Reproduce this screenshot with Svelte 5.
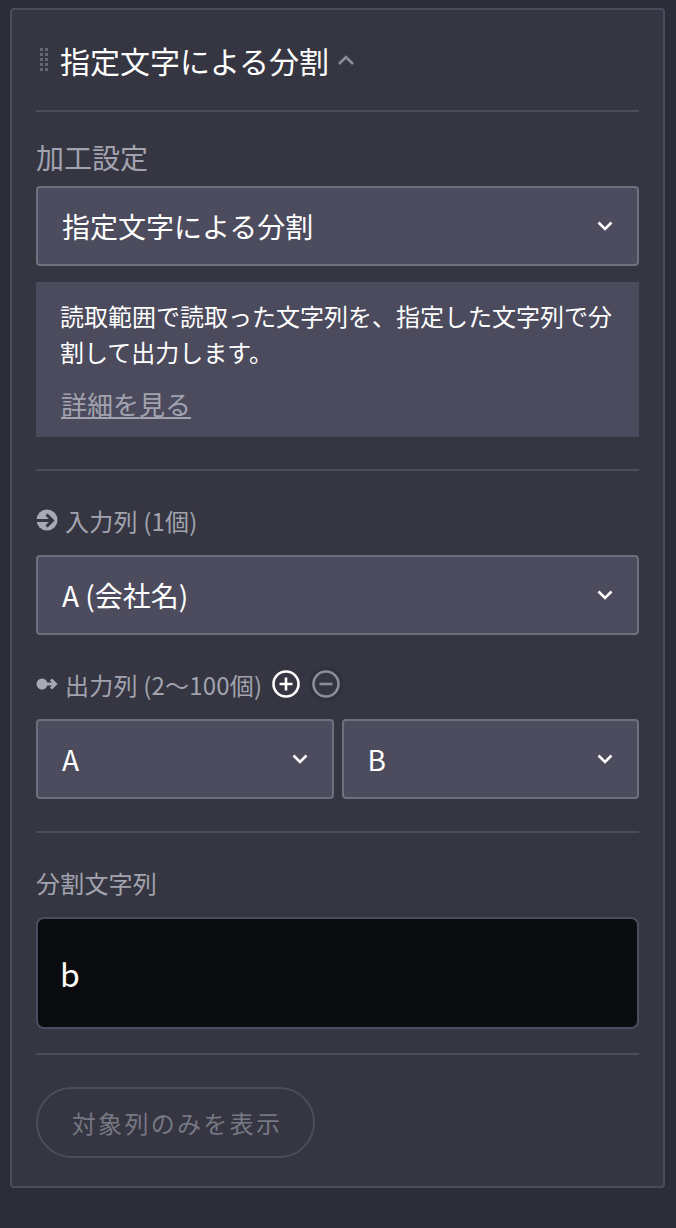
<script lang="ts">
  const method = '指定文字による分割';
  let separator = $state('b');
</script>

{#snippet chevron()}
  <svg class="chevron" width="16" height="12" viewBox="0 0 16 12" aria-hidden="true">
    <path d="M1.5 2.500 8 9l6.500-6.500" fill="none" stroke="currentColor" stroke-width="2.600" />
  </svg>
{/snippet}

{#snippet select(text: string)}
  <div class="select">
    <span>{text}</span>
    {@render chevron()}
  </div>
{/snippet}

<div class="panel">
  <header class="head">
    <svg class="grip" width="8" height="24" viewBox="0 0 8 24" aria-hidden="true">
      {#each [0, 5, 10, 15, 20] as y}
        <rect x="0" {y} width="3" height="3" />
        <rect x="5" {y} width="3" height="3" />
      {/each}
    </svg>
    <h2>{method}</h2>
    <svg class="up" width="18" height="12" viewBox="0 0 18 12" aria-hidden="true">
      <path d="M2 10 9 3l7 7" fill="none" stroke="currentColor" stroke-width="2.600" />
    </svg>
  </header>

  <section class="settings">
    <div class="big-label">加工設定</div>
    {@render select(method)}
    <div class="info">
      <p>読取範囲で読取った文字列を、指定した文字列で分割して出力します。</p>
      <a href="#detail">詳細を見る</a>
    </div>
  </section>

  <section class="columns">
    <div class="label">
      <svg width="22" height="22" viewBox="0 0 22 22" aria-hidden="true">
        <circle cx="11" cy="11" r="10.500" fill="#a9a9b5" />
        <path d="M0 11.500h15.500M10.500 5.500l6 6-6 6" fill="none" stroke="#353641" stroke-width="3" />
      </svg>
      <span>入力列 (1個)</span>
    </div>
    {@render select('A (会社名)')}

    <div class="label output">
      <svg width="22" height="14" viewBox="0 0 22 14" aria-hidden="true">
        <circle cx="6" cy="7" r="5.500" fill="#a9a9b5" />
        <path d="M8 7h12M15 2.500 19.500 7 15 11.500" fill="none" stroke="#a9a9b5" stroke-width="3" />
      </svg>
      <span>出力列 (2〜100個)</span>
      <button class="round add" aria-label="追加">
        <svg width="28" height="28" viewBox="0 0 28 28" aria-hidden="true">
          <circle cx="14" cy="14" r="12.500" fill="none" stroke="currentColor" stroke-width="2.600" />
          <path d="M14 7.500v13M7.500 14h13" fill="none" stroke="currentColor" stroke-width="2.600" />
        </svg>
      </button>
      <button class="round remove" aria-label="削除">
        <svg width="28" height="28" viewBox="0 0 28 28" aria-hidden="true">
          <circle cx="14" cy="14" r="12.500" fill="none" stroke="currentColor" stroke-width="2.600" />
          <path d="M7.500 14h13" fill="none" stroke="currentColor" stroke-width="2.600" />
        </svg>
      </button>
    </div>
    <div class="pair">
      {@render select('A')}
      {@render select('B')}
    </div>
  </section>

  <section class="separator">
    <label class="label" for="sep">分割文字列</label>
    <input id="sep" type="text" bind:value={separator} />
  </section>

  <section class="actions">
    <button class="pill" disabled>対象列のみを表示</button>
  </section>
</div>

<style>
  :global(body) {
    background: #2d2d37;
  }

  .panel {
    box-sizing: border-box;
    width: 655px;
    height: 1180px;
    margin: 8px 0 0 10px;
    padding: 0 24px;
    background: #353641;
    border: 2px solid #4b4c5e;
    border-radius: 4px;
    font-family: "Noto Sans CJK JP", "Noto Sans", sans-serif;
    color: #fff;
  }

  .head {
    display: flex;
    align-items: center;
    height: 100px;
    border-bottom: 2px solid #4b4c5e;
  }

  .grip {
    margin-left: 4px;
    fill: #666775;
  }

  h2 {
    margin: 0 0 0 12px;
    font-size: 30px;
    font-weight: 400;
    line-height: 40px;
  }

  .up {
    margin: 0 0 0 8px;
    color: #8c8d99;
  }

  .settings {
    padding-bottom: 32px;
    border-bottom: 2px solid #4b4c5e;
  }

  .big-label {
    margin-top: 26px;
    height: 48px;
    line-height: 38px;
    font-size: 28px;
    color: #a2a3af;
  }

  .select {
    box-sizing: border-box;
    display: flex;
    align-items: center;
    justify-content: space-between;
    flex: 1;
    height: 80px;
    padding: 0 25px 0 24px;
    background: #4c4c5e;
    border: 2px solid #6f707e;
    border-radius: 4px;
    font-size: 28px;
  }

  .chevron {
    flex: none;
    margin-right: -1px;
  }

  .info {
    margin-top: 16px;
    padding: 16px 24px 14px;
    background: #4b4b5d;
    font-size: 24px;
  }

  .info p {
    margin: 0;
    line-height: 36px;
  }

  .info a {
    display: block;
    margin: 15px 0 0 1px;
    font-size: 26px;
    line-height: 38px;
    color: #a2a3af;
  }

  .columns {
    padding: 29px 0 32px;
    border-bottom: 2px solid #4b4c5e;
  }

  .label {
    display: flex;
    align-items: center;
    gap: 7px;
    height: 40px;
    margin-bottom: 15px;
    font-size: 24px;
    letter-spacing: 0.2px;
    color: #a2a3af;
  }

  .output {
    margin: 29px 0 15px;
  }

  .round {
    display: flex;
    padding: 0;
    border: none;
    border-radius: 50%;
    background: none;
    color: #fff;
  }

  .add {
    margin-left: 3px;
  }

  .remove {
    margin-left: 5px;
    color: #8c8d99;
    box-shadow: 0 0 0 3px #30313b;
  }

  .pair {
    display: flex;
    gap: 8px;
  }

  .separator {
    padding: 29px 0 24px;
    border-bottom: 2px solid #4b4c5e;
  }

  .separator .label {
    margin-bottom: 15px;
  }

  input {
    box-sizing: border-box;
    display: block;
    width: 100%;
    height: 112px;
    padding: 0 22px;
    background: #0b0c10;
    border: 2px solid #4b4c5e;
    border-radius: 8px;
    outline: none;
    font-family: inherit;
    font-size: 32px;
    color: #fff;
  }

  .actions {
    padding-top: 32px;
  }

  .pill {
    box-sizing: border-box;
    width: 279px;
    height: 71px;
    padding: 0 0 0 3px;
    background: none;
    border: 2px solid #4b4c5e;
    border-radius: 36px;
    font-family: inherit;
    font-size: 24px;
    letter-spacing: 2.300px;
    color: #777884;
  }
</style>
